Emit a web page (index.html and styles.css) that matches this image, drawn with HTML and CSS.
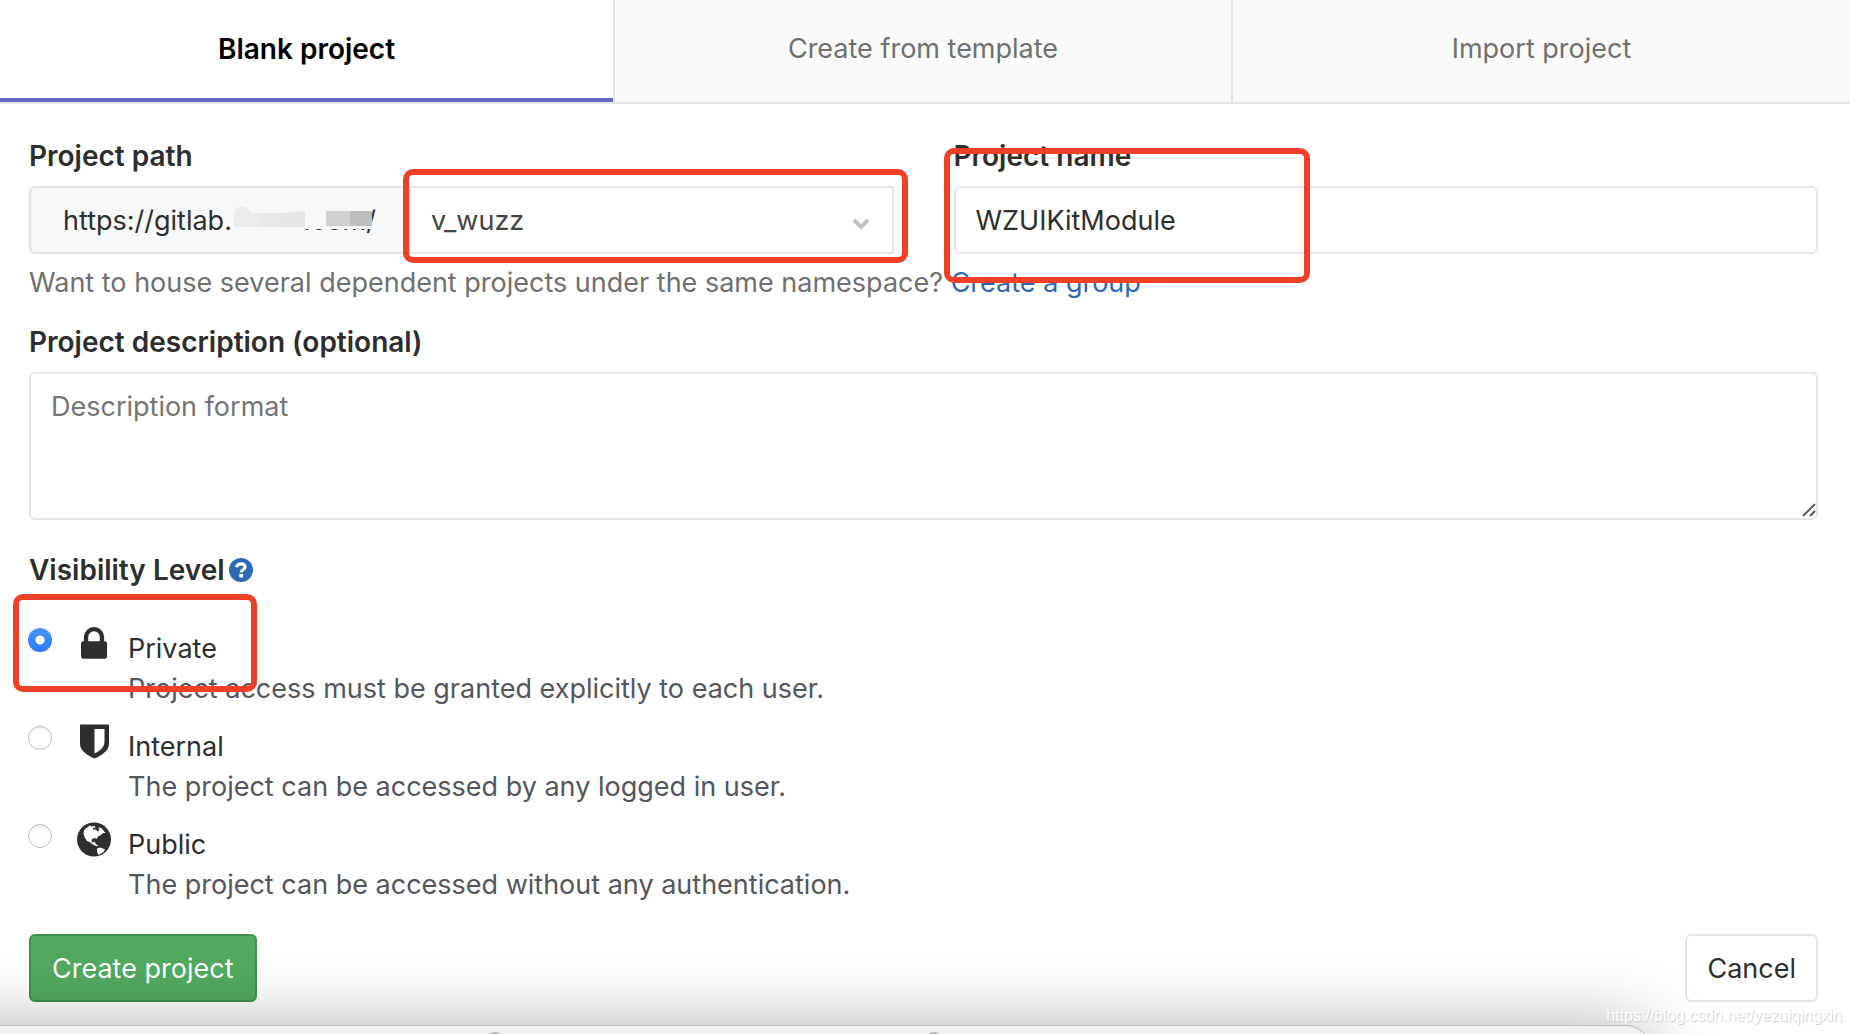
FILE: index.html
```html
<!DOCTYPE html>
<html lang="en">
<head>
<meta charset="utf-8">
<title>New project</title>
<link rel="stylesheet" href="styles.css">
</head>
<body>
<nav class="tabs">
  <a class="tab tab-active" href="#blank">Blank project</a>
  <a class="tab" href="#template">Create from template</a>
  <a class="tab" href="#import">Import project</a>
</nav>
<form class="form">
  <div class="row">
    <div class="field">
      <label class="label" for="namespace">Project path</label>
      <div class="path">
        <div class="prefix"><span>https://gitlab.</span><span class="masked">.com/<svg class="mosaic" width="144" height="28" viewBox="0 0 144 28" aria-hidden="true">
          <path fill="#f7f8fa" d="M0 0h139v23H0z"/>
          <circle cx="10" cy="9" r="8.500" fill="#ebecee"/>
          <path fill="#ebecee" d="M2 7h25v14H2z"/>
          <path fill="#e8e9eb" d="M27 7h22v14H27z"/>
          <path fill="#e5e6e8" d="M49 7l24-2v16H49z"/>
          <path fill="#d0d1d3" d="M94 5h24v15H94z"/>
          <path fill="#bcbdbf" d="M118 5h22v15h-22z"/>
        </svg></span></div>
        <div class="select-box">
          <select class="select" id="namespace"><option>v_wuzz</option></select>
          <svg class="chevron" width="18" height="14" viewBox="0 0 18 14" aria-hidden="true"><path d="M2 3l7 7 7-7" fill="none" stroke="#c4c4c4" stroke-width="4"/></svg>
          <span class="mark mark-select"></span>
        </div>
      </div>
    </div>
    <div class="field">
      <label class="label" for="name">Project name</label>
      <input class="input" id="name" type="text" value="WZUIKitModule">
      <span class="mark mark-name"></span>
    </div>
  </div>
  <p class="help">Want to house several dependent projects under the same namespace? <a class="link" href="#group">Create a group</a></p>
  <label class="label" for="description">Project description (optional)</label>
  <div class="area-box">
    <textarea class="area" id="description" placeholder="Description format"></textarea>
    <svg class="grip" width="14" height="14" viewBox="0 0 14 14" aria-hidden="true"><path d="M1 13L13 1M8 13l5-5" stroke="#5a5a5a" stroke-width="2"/></svg>
  </div>
  <fieldset class="levels">
    <legend class="label legend">Visibility Level
      <a class="hint" href="#help" aria-label="Help"><svg width="24" height="24" viewBox="0 0 24 24"><circle cx="12" cy="12" r="12" fill="#2f68b4"/><path d="M7.500 9.200Q8.200 5.800 12 5.800q4 0 4 3.200 0 1.800-2 2.900-1.700 1-1.700 2.300" fill="none" stroke="#fff" stroke-width="3.200"/><path fill="#fff" d="M10.300 15.800h3.800v3.700h-3.800z"/></svg></a>
    </legend>
    <div class="level">
      <input class="radio" type="radio" name="level" id="private" checked>
      <svg class="icon" width="34" height="36" viewBox="0 0 34 36" aria-hidden="true"><path transform="translate(4 -2) scale(.0226)" fill="#2e2e2e" d="M320 768h512v-192q0-106-75-181t-181-75-181 75-75 181v192zm832 96v576q0 40-28 68t-68 28h-960q-40 0-68-28t-28-68v-576q0-40 28-68t68-28h32v-192q0-184 132-316t316-132 316 132 132 316v192h32q40 0 68 28t28 68z"/></svg>
      <label class="level-text" for="private"><span class="level-name">Private</span><span class="level-note">Project access must be granted explicitly to each user.</span></label>
      <span class="mark mark-level"></span>
    </div>
    <div class="level">
      <input class="radio" type="radio" name="level" id="internal">
      <svg class="icon" width="34" height="36" viewBox="0 0 34 36" aria-hidden="true"><path fill="#2e2e2e" fill-rule="evenodd" d="M4 .5h27q1 0 1 1v18q0 9-14.500 15Q3 28.500 3 19.500v-18q0-1 1-1zm13.500 4.500v24.500Q27.500 25 27.500 18v-13z"/></svg>
      <label class="level-text" for="internal"><span class="level-name">Internal</span><span class="level-note">The project can be accessed by any logged in user.</span></label>
    </div>
    <div class="level">
      <input class="radio" type="radio" name="level" id="public">
      <svg class="icon" width="34" height="36" viewBox="0 0 34 36" aria-hidden="true"><circle cx="17" cy="17.500" r="17" fill="#2e2e2e"/><path fill="#fff" d="M8 7l5-3.500 1.500 1 3-.5 1 1.500-2.500.5 0 1.500 3 0 1.500 2 1.500-1-.5-3 3 .5 1.500 2 2.500 3-2.500 0-2 2-3 1.500-1.500 2.500-1.500-1-3 1-.5 2.500 1.500 1 2-1 .5 2.500 2 1 0 1.500-4-1.500-3-2.500-3.500-1.500-2-3-1.500-4 .5-3.500zM20 26.500l3-1 3 1 2 1-1.500 2.500-5 3-1.500-3z"/></svg>
      <label class="level-text" for="public"><span class="level-name">Public</span><span class="level-note">The project can be accessed without any authentication.</span></label>
    </div>
  </fieldset>
  <div class="actions">
    <button class="button button-create" type="submit">Create project</button>
    <button class="button" type="button">Cancel</button>
  </div>
</form>
<div class="dock-area"><div class="dock"><span class="knob"></span><span class="knob"></span></div></div>
<div class="watermark">https://blog.csdn.net/yezuiqingxin</div>
</body>
</html>
```
FILE: styles.css
```css
* { box-sizing: border-box; }
body {
  margin: 0;
  position: relative;
  min-height: 100vh;
  background: #fff;
  color: #2e2e2e;
  font: 27px/40px Inter, "Liberation Sans", sans-serif;
}
.tabs {
  display: grid;
  grid-template-columns: 613fr 618fr 619fr;
  height: 104px;
  border-bottom: 2px solid #e5e5e5;
}
.tab {
  padding-top: 29px;
  background: #fafafa;
  border-left: 2px solid #e5e5e5;
  color: #707070;
  text-align: center;
  text-decoration: none;
}
.tab-active {
  background: #fff;
  border-left: 0;
  border-bottom: 4px solid #6666c4;
  color: #000;
  font-size: 28px;
  font-weight: 600;
}
.form { padding: 32px 32px 30px 29px; }
.row {
  display: grid;
  grid-template-columns: 1fr 1fr;
  gap: 60px;
}
.field { position: relative; min-width: 0; }
.label { display: block; margin-bottom: 10px; font-size: 28px; font-weight: 600; }
.path { display: flex; height: 68px; }
.prefix {
  width: 380px;
  padding: 13px 0 0 32px;
  border: 2px solid #e5e5e5;
  border-right: 0;
  border-radius: 6px 0 0 6px;
  background: #f7f8fa;
  white-space: nowrap;
}
.masked { position: relative; display: inline-block; width: 144px; text-align: right; }
.mosaic { position: absolute; left: 0; top: 5px; }
.select-box { position: relative; flex: 1; }
.select, .input, .area {
  display: block;
  width: 100%;
  height: 68px;
  margin: 0;
  padding: 0 20px;
  border: 2px solid #e5e5e5;
  border-radius: 6px;
  outline: 0;
  background: #fff;
  color: #2e2e2e;
  font: inherit;
}
.select { appearance: none; padding-top: 2px; border-radius: 0; color: #444; }
.chevron { position: absolute; right: 24px; top: 31px; }
.area-box { position: relative; }
.area { height: 148px; padding: 13px 20px; resize: none; }
.area::placeholder { color: #757575; opacity: 1; }
.grip { position: absolute; right: 2px; bottom: 3px; }
.mark {
  position: absolute;
  z-index: 1;
  border: 6px solid #ee4027;
  border-radius: 10px;
  pointer-events: none;
}
.mark-select { inset: -17px -14px -9px -6px; }
.mark-name { left: -10px; top: 12px; width: 366px; height: 135px; }
.mark-level { left: -16px; top: -34px; width: 244px; height: 98px; }
.help { margin: 9px 0 19px; color: #707070; }
.link { color: #2f68b4; text-decoration: none; }
.levels { margin: 30px 0 0; padding: 0; border: 0; }
.legend { display: flex; align-items: center; gap: 4px; margin-bottom: 38px; padding: 0; }
.hint { display: flex; }
.level {
  position: relative;
  display: flex;
  align-items: flex-start;
  margin-bottom: 17px;
}
.level:last-child { margin-bottom: 29px; }
.radio {
  appearance: none;
  flex: none;
  width: 24px;
  height: 24px;
  margin: 0 25px 0 -1px;
  border: 1px solid #b8b8b8;
  border-radius: 50%;
  background: linear-gradient(#f4f4f4, #fff 40%);
}
.radio:checked {
  border: 0;
  background: radial-gradient(circle, #fff 4px, transparent 5px), linear-gradient(#4a96fa, #2a78f6);
}
.icon { flex: none; margin: -2px 17px 0 0; }
.level-text { padding-top: 1px; }
.level-name, .level-note { display: block; }
.level-note { color: #55555c; }
.actions { display: flex; justify-content: space-between; }
.button {
  height: 68px;
  padding: 2px 20px 0;
  border: 2px solid #e5e5e5;
  border-radius: 6px;
  background: #fff;
  color: #2e2e2e;
  font: inherit;
}
.button-create { padding: 2px 21px 0; border-color: #3f8f4f; background: #52aa60; color: #fff; }
.dock-area {
  position: absolute;
  left: 0;
  right: 0;
  bottom: 0;
  height: 120px;
  overflow: hidden;
  pointer-events: none;
}
.dock {
  position: absolute;
  left: -100px;
  right: 200px;
  bottom: -91px;
  height: 100px;
  border: 1px solid #bbb;
  border-radius: 24px;
  background: #f1f1f1;
  box-shadow: 0 0 70px rgba(0, 0, 0, .3);
}
.knob {
  position: absolute;
  left: 584px;
  top: 6px;
  width: 20px;
  height: 20px;
  border-radius: 50%;
  background: #b5b5b5;
}
.knob + .knob { left: 1023px; }
.watermark {
  position: absolute;
  right: 8px;
  bottom: 8px;
  color: #fff;
  font: 16px/20px "Liberation Sans", sans-serif;
  text-shadow: 1px 1px 1px #ccc;
}
```
